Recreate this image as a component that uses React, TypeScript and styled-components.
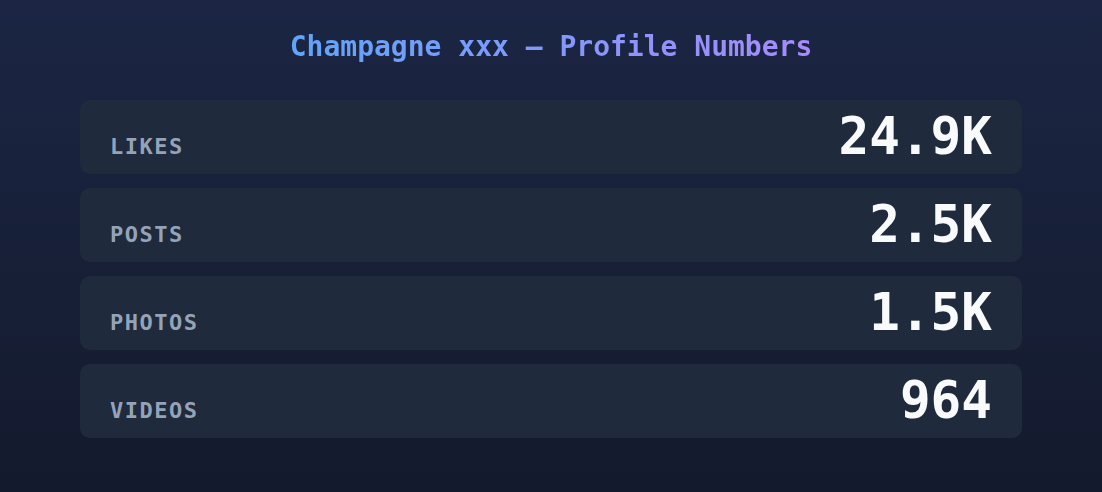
import React from 'react';
import styled, { createGlobalStyle } from 'styled-components';

interface Stat {
  label: string;
  value: string;
}

const stats: Array<Stat> = [
  { label: 'Likes', value: '24.9K' },
  { label: 'Posts', value: '2.5K' },
  { label: 'Photos', value: '1.5K' },
  { label: 'Videos', value: '964' },
];

const GlobalStyle = createGlobalStyle`
  html, body {
    margin: 0;
    padding: 0;
  }
  body {
    font-family: "DejaVu Sans Mono", "Liberation Mono", monospace;
    background: #151b2f;
  }
`;

const App: React.FC = () => (
  <>
    <GlobalStyle />
    <Page>
      <Title>Champagne xxx — Profile Numbers</Title>
      <StatList>
        {stats.map((stat) => (
          <StatCard key={stat.label}>
            <StatLabel>{stat.label}</StatLabel>
            <StatValue>{stat.value}</StatValue>
          </StatCard>
        ))}
      </StatList>
    </Page>
  </>
);

export default App;

const Page = styled.div`
  box-sizing: border-box;
  width: 100%;
  height: 492px;
  padding: 30px 80px 0;
  background: linear-gradient(180deg, #1b2644 0%, #141a2d 100%);
  display: flex;
  flex-direction: column;
  align-items: center;
`;

const Title = styled.h1`
  margin: 0;
  font-size: 28px;
  line-height: 1.2;
  font-weight: 700;
  background: linear-gradient(90deg, #60a5fa 0%, #a78bfa 100%);
  -webkit-background-clip: text;
  background-clip: text;
  color: transparent;
`;

const StatList = styled.div`
  width: 100%;
  margin-top: 36px;
  display: flex;
  flex-direction: column;
  gap: 14px;
`;

const StatCard = styled.div`
  display: flex;
  align-items: baseline;
  justify-content: space-between;
  height: 74px;
  box-sizing: border-box;
  padding: 11px 30px;
  border-radius: 10px;
  background: #1f2a3c;
`;

const StatLabel = styled.span`
  font-size: 22px;
  font-weight: 700;
  letter-spacing: 1.5px;
  text-transform: uppercase;
  color: #94a3b8;
`;

const StatValue = styled.span`
  font-size: 51px;
  line-height: 52px;
  font-weight: 700;
  color: #f8fafc;
`;
